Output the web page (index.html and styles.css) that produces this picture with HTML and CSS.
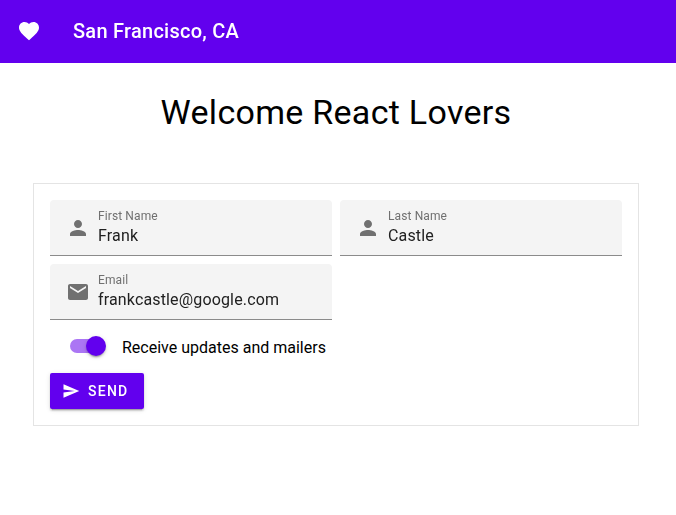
FILE: index.html
```html
<!DOCTYPE html>
<html lang="en">
<head>
<meta charset="utf-8">
<title>Welcome React Lovers</title>
<link rel="stylesheet" href="styles.css">
</head>
<body>
<header class="app-bar">
  <svg class="icon" viewBox="0 0 24 24"><path d="M12 21.35l-1.45-1.32C5.4 15.36 2 12.28 2 8.5 2 5.42 4.42 3 7.5 3c1.74 0 3.41.81 4.5 2.09C13.09 3.81 14.76 3 16.5 3 19.58 3 22 5.42 22 8.5c0 3.78-3.4 6.86-8.55 11.54L12 21.35z"/></svg>
  <span class="app-title">San Francisco, CA</span>
</header>
<main>
  <h1 class="headline">Welcome React Lovers</h1>
  <form class="card">
    <div class="fields">
      <div class="field">
        <svg class="icon" viewBox="0 0 24 24"><path d="M12 12c2.21 0 4-1.79 4-4s-1.79-4-4-4-4 1.79-4 4 1.79 4 4 4zm0 2c-2.67 0-8 1.34-8 4v2h16v-2c0-2.66-5.33-4-8-4z"/></svg>
        <div class="text"><span class="label">First Name</span><span class="value">Frank</span></div>
      </div>
      <div class="field">
        <svg class="icon" viewBox="0 0 24 24"><path d="M12 12c2.21 0 4-1.79 4-4s-1.79-4-4-4-4 1.79-4 4 1.79 4 4 4zm0 2c-2.67 0-8 1.34-8 4v2h16v-2c0-2.66-5.33-4-8-4z"/></svg>
        <div class="text"><span class="label">Last Name</span><span class="value">Castle</span></div>
      </div>
      <div class="field">
        <svg class="icon" viewBox="0 0 24 24"><path d="M20 4H4c-1.1 0-1.99.9-1.99 2L2 18c0 1.1.9 2 2 2h16c1.1 0 2-.9 2-2V6c0-1.1-.9-2-2-2zm0 4l-8 5-8-5V6l8 5 8-5v2z"/></svg>
        <div class="text"><span class="label">Email</span><span class="value">frankcastle@google.com</span></div>
      </div>
    </div>
    <div class="switch-row">
      <span class="track"><span class="thumb"></span></span>
      <span class="switch-label">Receive updates and mailers</span>
    </div>
    <button class="send" type="button">
      <svg class="send-icon" viewBox="0 0 24 24"><path d="M2.01 21L23 12 2.01 3 2 10l15 2-15 2z"/></svg>
      <span>SEND</span>
    </button>
  </form>
</main>
</body>
</html>
```
FILE: styles.css
```css
* { box-sizing: border-box; }
body {
  margin: 0;
  background: #fff;
  color: #000;
  font-family: Roboto, sans-serif;
}
.icon { display: block; width: 24px; height: 24px; fill: currentColor; flex: none; }
.app-bar {
  display: flex;
  align-items: center;
  height: 63px;
  padding: 0 17px 1px;
  background: #6200ee;
  color: #fff;
}
.app-title {
  margin-left: 32px;
  font-size: 20px;
  font-weight: 500;
  line-height: 32px;
  letter-spacing: 0.25px;
  will-change: transform;
}
.headline {
  margin: 29px 0 51px;
  padding-right: 4px;
  text-align: center;
  font-size: 34px;
  font-weight: 400;
  line-height: 40px;
  letter-spacing: 0.29px;
}
.card {
  width: 606px;
  height: 243px;
  margin-left: 33px;
  padding: 16px;
  border: 1px solid #e4e4e4;
}
.fields { display: grid; grid-template-columns: 282px 282px; gap: 8px; }
.field {
  display: flex;
  height: 56px;
  padding: 16px 16px 0;
  border-bottom: 1px solid #8b8b8b;
  border-radius: 4px 4px 0 0;
  background: #f4f4f4;
  color: #707070;
  will-change: transform;
}
.text { display: flex; flex-direction: column; margin: -8px 0 0 8px; }
.label { font-size: 12px; line-height: 16px; letter-spacing: 0.11px; }
.value { color: #212121; font-size: 16px; line-height: 24px; letter-spacing: 0.15px; }
.switch-row { display: flex; align-items: center; height: 53px; padding-left: 20px; }
.track {
  display: flex;
  align-items: center;
  justify-content: flex-end;
  width: 32px;
  height: 14px;
  margin-bottom: 2px;
  border-radius: 7px;
  background: #ab76f4;
}
.thumb {
  flex: none;
  width: 20px;
  height: 20px;
  margin-right: -4px;
  border-radius: 50%;
  background: #6200ee;
  box-shadow: 0 3px 1px -2px rgba(0,0,0,.2), 0 2px 2px rgba(0,0,0,.14), 0 1px 5px rgba(0,0,0,.12);
}
.switch-label { margin: 2px 0 0 20px; font-size: 16px; line-height: 24px; }
.send {
  display: flex;
  align-items: center;
  width: 94px;
  height: 36px;
  padding: 0 12px;
  border: 0;
  border-radius: 2px;
  background: #6200ee;
  color: #fff;
  font: 500 14px/36px Roboto, sans-serif;
  letter-spacing: 1.25px;
  box-shadow: 0 3px 1px -2px rgba(0,0,0,.2), 0 2px 2px rgba(0,0,0,.14), 0 1px 5px rgba(0,0,0,.12);
  will-change: transform;
}
.send-icon { width: 18px; height: 18px; margin-right: 8px; fill: currentColor; }
```
